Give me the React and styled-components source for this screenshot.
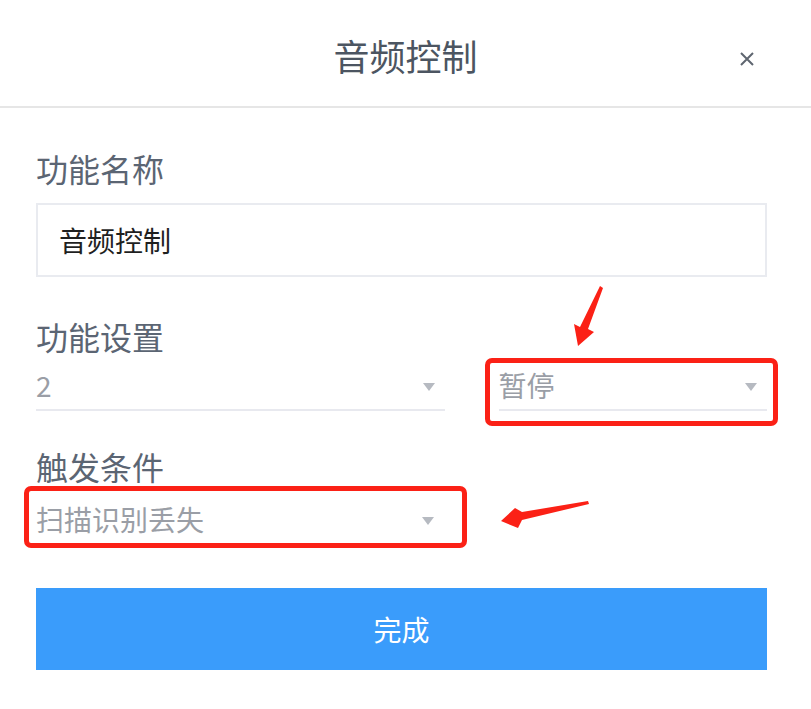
import React from "react";
import styled, { createGlobalStyle } from "styled-components";

const GlobalStyle = createGlobalStyle`
  html, body {
    margin: 0;
    padding: 0;
    background: #fff;
  }
  body {
    font-family: "Noto Sans CJK SC", "Noto Sans", sans-serif;
  }
  * {
    box-sizing: border-box;
  }
`;

const Page = styled.div`
  position: relative;
  width: 811px;
  height: 709px;
  overflow: hidden;
  background: #fff;
`;

const Header = styled.div`
  position: relative;
  height: 108px;
  display: flex;
  align-items: center;
  justify-content: center;
  border-bottom: 2px solid #e6e6e6;
  padding-top: 4px;

  h1 {
    margin: 0;
    font-size: 36px;
    font-weight: 400;
    color: #4c5561;
  }
`;

const Close = styled.button`
  position: absolute;
  right: 54px;
  top: 49px;
  width: 20px;
  height: 20px;
  padding: 0;
  border: none;
  background: none;
  display: flex;
  align-items: center;
  justify-content: center;
`;

const Body = styled.div`
  padding: 40px 44px 0 36px;
  display: flex;
  flex-direction: column;
`;

const Label = styled.div`
  font-size: 32px;
  line-height: 40px;
  color: #5b6573;
  margin-top: ${(p) => p.$top || 0}px;
`;

const TextInput = styled.div`
  margin-top: 15px;
  height: 74px;
  border: 2px solid #e9ebf0;
  padding-left: 21px;
  display: flex;
  align-items: center;
  font-size: 28px;
  color: #1f1f1f;
`;

const Row = styled.div`
  display: flex;
  gap: 54px;
  margin-top: ${(p) => p.$top || 0}px;
`;

const Select = styled.div`
  flex: ${(p) => p.$grow || 1};
  max-width: ${(p) => (p.$width ? `${p.$width}px` : "none")};
  display: flex;
  align-items: center;
  justify-content: space-between;
  height: 44px;
  padding-bottom: 6px;
  border-bottom: 2px solid ${(p) => (p.$line ? "#e8e9ef" : "transparent")};
  font-size: 28px;
  line-height: 36px;
  color: #9a9ea6;
`;

const Caret = styled.span`
  width: 0;
  height: 0;
  margin-right: 10px;
  margin-top: 4px;
  border-left: 6px solid transparent;
  border-right: 6px solid transparent;
  border-top: 8px solid #b6bac1;
`;

const Button = styled.button`
  margin-top: 43px;
  height: 82px;
  border: none;
  background: #3a9cfb;
  color: #fff;
  font-family: inherit;
  font-size: 28px;
  display: flex;
  align-items: center;
  justify-content: center;
  width: 731px;
`;

const Mark = styled.div`
  position: absolute;
  left: ${(p) => p.$x}px;
  top: ${(p) => p.$y}px;
  width: ${(p) => p.$w}px;
  height: ${(p) => p.$h}px;
  border: 5px solid #fb2116;
  border-radius: 7px;
  pointer-events: none;
`;

const Arrows = styled.svg`
  position: absolute;
  left: 0;
  top: 0;
  pointer-events: none;
`;

export default function App() {
  return (
    <Page>
      <GlobalStyle />
      <Header>
        <h1>音频控制</h1>
        <Close aria-label="close">
          <svg width="16" height="16" viewBox="0 0 16 16">
            <path d="M2 2 L14 14 M14 2 L2 14" stroke="#5f6670" strokeWidth="2" />
          </svg>
        </Close>
      </Header>
      <Body>
        <Label>功能名称</Label>
        <TextInput>音频控制</TextInput>

        <Label $top={39}>功能设置</Label>
        <Row $top={11}>
          <Select $grow={408} $line>
            <span>2</span>
            <Caret />
          </Select>
          <Select $grow={268} $line>
            <span>暂停</span>
            <Caret />
          </Select>
        </Row>

        <Label $top={35}>触发条件</Label>
        <Row $top={15}>
          <Select $width={408}>
            <span>扫描识别丢失</span>
            <Caret />
          </Select>
        </Row>

        <Button>完成</Button>
      </Body>

      <Mark $x={485} $y={358} $w={293} $h={68} />
      <Mark $x={24} $y={486} $w={443} $h={62} />

      <Arrows width="811" height="709" viewBox="0 0 811 709">
        <polygon
          points="600,286 603,288 588,329 594,332 578,346 574,324 580,327"
          fill="#fb2116"
        />
        <polygon
          points="588,501 589,504 522,520 518,528 501,521 515,508 522,512"
          fill="#fb2116"
        />
      </Arrows>
    </Page>
  );
}
